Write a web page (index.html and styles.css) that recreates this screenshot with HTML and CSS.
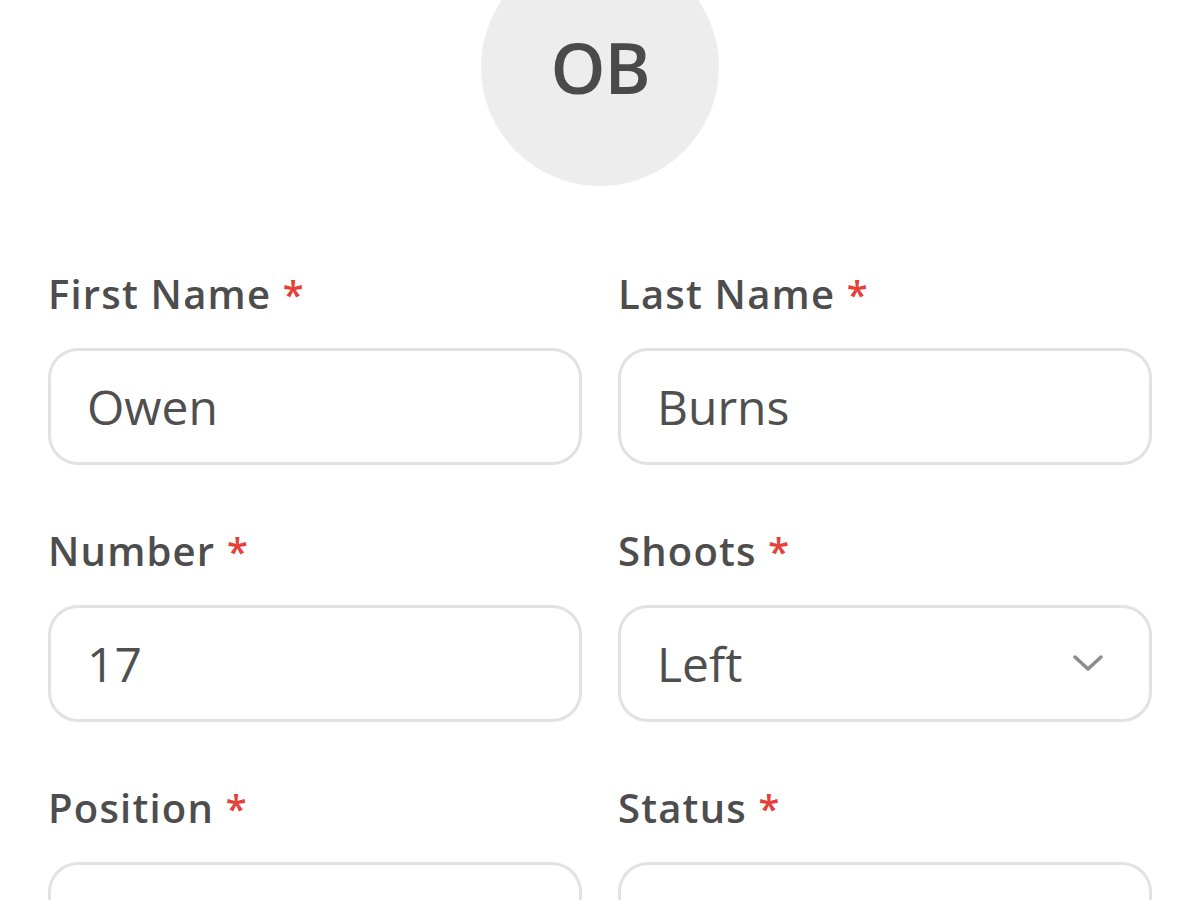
FILE: index.html
```html
<!DOCTYPE html>
<html lang="en">
<head>
<meta charset="utf-8">
<title>Edit Player</title>
<link rel="stylesheet" href="styles.css">
</head>
<body>
<div class="avatar-wrap">
  <div class="avatar">OB</div>
</div>
<form class="form">
  <div class="field">
    <label class="label">First Name <span class="req">*</span></label>
    <input class="input" type="text" value="Owen">
  </div>
  <div class="field">
    <label class="label">Last Name <span class="req">*</span></label>
    <input class="input" type="text" value="Burns">
  </div>
  <div class="field">
    <label class="label">Number <span class="req">*</span></label>
    <input class="input" type="text" value="17">
  </div>
  <div class="field">
    <label class="label">Shoots <span class="req">*</span></label>
    <div class="select-box">
      <select class="select"><option>Left</option><option>Right</option></select>
      <svg class="chevron" width="30" height="17" viewBox="0 0 30 17"><polyline points="2,2 15,14 28,2" fill="none" stroke="#8c8c8c" stroke-width="3.5" stroke-linecap="round" stroke-linejoin="round"/></svg>
    </div>
  </div>
  <div class="field">
    <label class="label">Position <span class="req">*</span></label>
    <input class="input" type="text" value="">
  </div>
  <div class="field">
    <label class="label">Status <span class="req">*</span></label>
    <input class="input" type="text" value="">
  </div>
</form>
</body>
</html>
```
FILE: styles.css
```css
html, body {
  margin: 0;
  padding: 0;
  background: #ffffff;
}
body {
  font-family: "Open Sans", "Noto Sans", sans-serif;
  color: #4d4d4d;
  overflow: hidden;
}
.avatar-wrap {
  display: flex;
  justify-content: center;
}
.avatar {
  width: 238px;
  height: 238px;
  margin-top: -52px;
  border-radius: 50%;
  background: #ededed;
  display: flex;
  align-items: center;
  justify-content: center;
  font-size: 70px;
  font-weight: 600;
  color: #4a4a4a;
  letter-spacing: -1px;
}
.form {
  display: grid;
  grid-template-columns: 1fr 1fr;
  column-gap: 36px;
  row-gap: 56px;
  padding: 0 48px;
  margin-top: 78px;
}
.field {
  display: flex;
  flex-direction: column;
}
.label {
  font-size: 40px;
  line-height: 60px;
  font-weight: 600;
  letter-spacing: 1.2px;
  color: #4d4d4d;
  margin-bottom: 24px;
}
.req {
  color: #e5403a;
  font-size: 38px;
}
.input,
.select-box {
  box-sizing: border-box;
  height: 117px;
  border: 3px solid #e2e2e2;
  border-radius: 30px;
  background: #ffffff;
}
.input {
  width: 100%;
  padding: 0 36px;
  font-family: inherit;
  font-size: 48px;
  font-weight: 400;
  color: #4f4f4f;
  outline: none;
}
.select-box {
  display: flex;
  align-items: center;
  padding: 0 46px 0 36px;
}
.select {
  flex: 1;
  appearance: none;
  -webkit-appearance: none;
  border: none;
  background: transparent;
  font-family: inherit;
  font-size: 48px;
  font-weight: 400;
  color: #4f4f4f;
  outline: none;
  padding: 0;
}
.chevron {
  flex: none;
}
```
